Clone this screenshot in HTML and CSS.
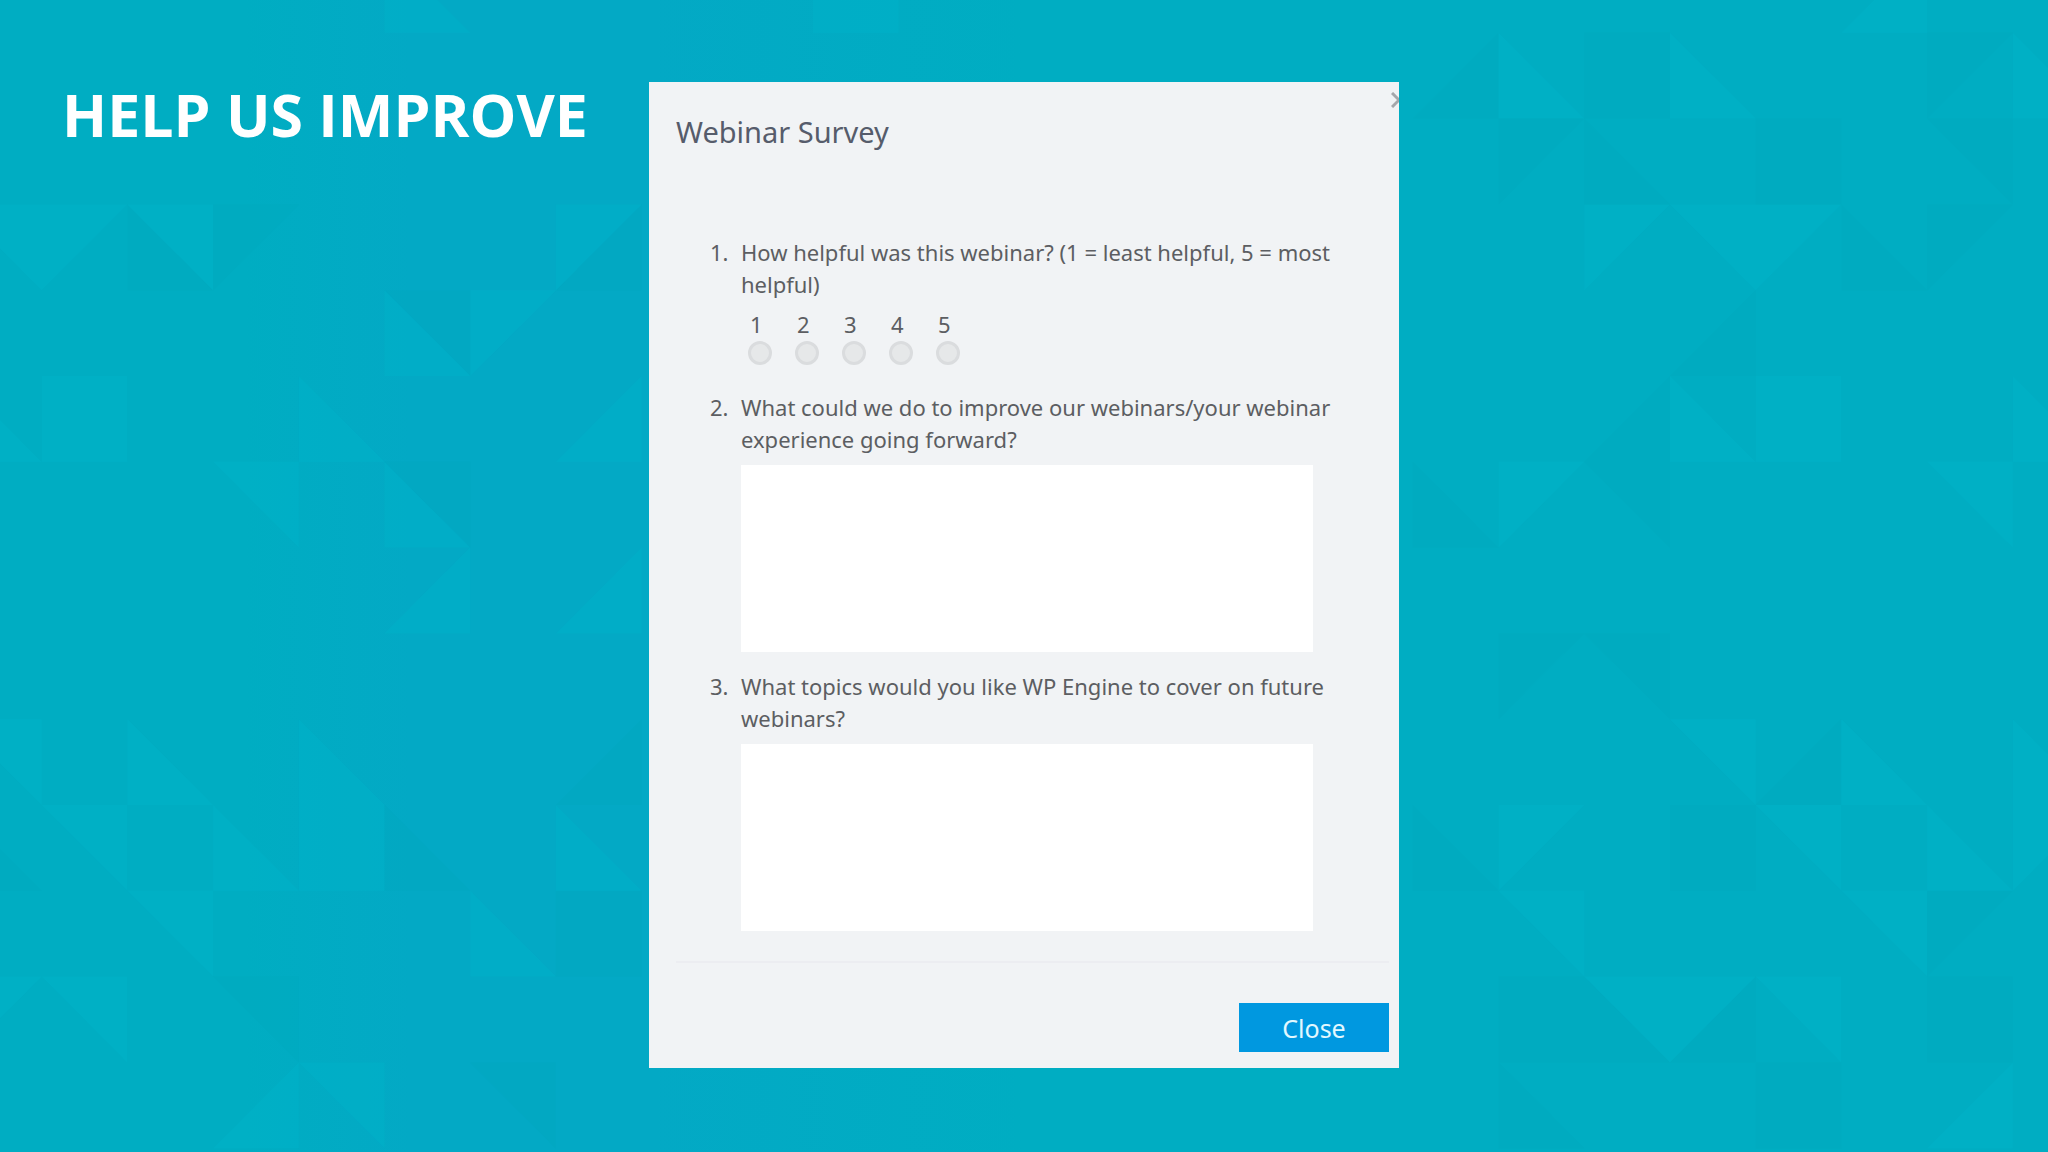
FILE: index.html
```html
<!DOCTYPE html>
<html lang="en">
<head>
    <meta charset="UTF-8">
    <meta name="viewport" content="width=device-width, initial-scale=1.0">
    <title>Webinar Survey</title>
    <link rel="stylesheet" href="styles.css">
</head>
<body>
    <!-- Mosaic backdrop, one unit per tile -->
    <svg class="backdrop" viewBox="0 0 2048 1152" preserveAspectRatio="xMidYMid slice" aria-hidden="true">
        <g transform="translate(-44 -53) scale(85.7 85.8)">
            <path class="tile-dark" d="M2 3v1h1z M3 3h1l-1 1z M8 3v1h-1z M5 4h1v1z M5 6h1v1z M8 9v1h-1z M0 10v1h1z M5 10v1h1z M7 11h1v1h-1z M3 12h1v1z M6 13h1v1z M18 1v1h-1z M19 1h1v1h-1z M23 1h1l-1 1z M18 2h1l-1 1z M19 2v1h1z M21 2h1v1h-1z M23 2h1v1z M22 3v1h1z M23 3h1l-1 1z M21 4v1h-1z M20 5v1h-1z M17 6v1h1z M19 6h1v1z M18 8h1l-1 1z M19 8h1v1z M22 9v1h-1z M17 10v1h1z M20 10h1v1h-1z M23 11h1l-1 1z M18 12h1v1h-1z M19 12v1h1z M21 12v1h-1z M23 12h1v1h-1z M18 13v1h1z M21 13h1v1h-1z"/>
            <path class="tile-light" d="M0 3h2l-1 1z M2 3h1v1z M7 3h1l-1 1z M5 4v1h1z M6 4h1l-1 1z M1 5h1v1h-1z M0 5v1h1z M4 5v1h1z M8 5v1h-1z M3 6h1v1z M5 6v1h1z M6 7v1h-1z M8 7v1h-1z M0 9h1v1z M2 9v1h1z M4 9v1h1z M1 10h1v1z M3 10v1h1z M4 10h1v1h-1z M7 10v1h1z M2 11h1v1z M6 11v1h1z M0 12h1l-1 1z M1 12h1v1z M4 13v1h-1z M4 13h1v1z M5 0v1h1z M10 0h1v1h-1z M23 0v1h-1z M18 1v1h1z M20 1v1h1z M24 1v1h1z M19 3h1l-1 1z M20 3h2l-1 1z M20 5v1h1z M21 5h1v1h-1z M24 5v1h1z M18 6h1l-1 1z M23 6h1v1z M20 9h1v1z M22 9v1h1z M24 9v1h1z M18 10h1l-1 1z M21 10h1v1z M23 10v1h1z M24 10h1l-1 1z M18 11h1v1z M22 11h1v1z M19 12h2l-1 1z M21 12h1v1z M24 13v1h-1z"/>
        </g>
    </svg>

    <main class="slide">
        <h1 class="headline">HELP US IMPROVE</h1>

        <form class="survey">
            <button class="dismiss" type="button" aria-label="Dismiss">
                <svg viewBox="0 0 16 16" width="16" height="16"><path d="M1 1L15 15M15 1L1 15"/></svg>
            </button>
            <h2 class="survey-title">Webinar Survey</h2>

            <ol class="questions">
                <li class="question">
                    <p class="question-text" id="helpful">How helpful was this webinar? (1 = least helpful, 5 = most helpful)</p>
                    <div class="rating" role="radiogroup" aria-labelledby="helpful">
                        <label class="rate">1<input type="radio" name="rating" value="1"></label>
                        <label class="rate">2<input type="radio" name="rating" value="2"></label>
                        <label class="rate">3<input type="radio" name="rating" value="3"></label>
                        <label class="rate">4<input type="radio" name="rating" value="4"></label>
                        <label class="rate">5<input type="radio" name="rating" value="5"></label>
                    </div>
                </li>
                <li class="question">
                    <label class="question-text" for="improve">What could we do to improve our webinars/your webinar experience going forward?</label>
                    <textarea class="answer" id="improve" name="improve"></textarea>
                </li>
                <li class="question">
                    <label class="question-text" for="topics">What topics would you like WP Engine to cover on future webinars?</label>
                    <textarea class="answer" id="topics" name="topics"></textarea>
                </li>
            </ol>

            <div class="survey-footer">
                <button class="close-btn" type="button">Close</button>
            </div>
        </form>
    </main>
</body>
</html>
```
FILE: styles.css
```css
* {
    box-sizing: border-box;
}
body {
    margin: 0;
    min-height: 100vh;
    background: linear-gradient(to right, #00adc2 0%, #00adc2 12%, #03a9c5 20%, #03a9c5 32%, #00adc2 50%);
    font-family: "Noto Sans", "Open Sans", sans-serif;
    color: #5c5e62;
}
.backdrop {
    position: absolute;
    top: 0;
    left: 0;
    width: 100%;
    height: 100%;
}
.tile-dark {
    fill: #00a6bd;
    opacity: 0.25;
}
.tile-light {
    fill: #00b5cb;
    opacity: 0.4;
}
.slide {
    position: relative;
    display: grid;
    grid-template-columns: 1fr minmax(600px, 750px) 1fr;
    align-items: start;
    padding: 82px 0;
}
.headline {
    margin: 0;
    padding-left: 62px;
    font-family: "Open Sans", sans-serif;
    font-size: 59px;
    line-height: 64px;
    font-weight: 700;
    color: white;
    white-space: nowrap;
}
.survey {
    position: relative;
    overflow: hidden;
    padding: 30px 10px 16px 27px;
    background-color: #f1f3f5;
}
.dismiss {
    position: absolute;
    top: 10px;
    right: -8px;
    padding: 0;
    border: none;
    background: none;
    line-height: 0;
    cursor: pointer;
}
.dismiss path {
    stroke: #a5a7ab;
    stroke-width: 3;
    fill: none;
}
.survey-title {
    margin: 0 0 84px;
    font-size: 29px;
    line-height: 40px;
    font-weight: 400;
    color: #565c6b;
}
.questions {
    display: grid;
    gap: 18px;
    margin: 0;
    padding: 0 40px 30px 34px;
    list-style: none;
    counter-reset: question;
}
.question {
    display: grid;
    grid-template-columns: 31px 1fr;
    font-size: 22px;
    line-height: 32px;
    counter-increment: question;
}
.question::before {
    content: counter(question) ".";
}
.question-text {
    margin: 0;
}
.rating {
    grid-column: 2;
    display: flex;
    gap: 23px;
    padding: 10px 0 8px 7px;
}
.rate {
    display: flex;
    flex-direction: column;
    gap: 3px;
    width: 24px;
    padding-left: 2px;
    line-height: 28px;
}
.rate input {
    appearance: none;
    width: 24px;
    height: 24px;
    margin: 0 0 0 -2px;
    border: 3px solid #dadcde;
    border-radius: 50%;
    background-color: #e6e8e9;
}
.rate input:checked {
    background-color: #0098e0;
}
.answer {
    grid-column: 2;
    width: 94%;
    height: 187px;
    margin-top: 10px;
    padding: 8px;
    border: none;
    background-color: white;
    font: inherit;
    color: inherit;
    resize: none;
}
.survey-footer {
    display: flex;
    justify-content: flex-end;
    padding-top: 40px;
    border-top: 2px solid #ecedf1;
}
.close-btn {
    width: 150px;
    height: 49px;
    border: none;
    background-color: #0098e0;
    font-family: inherit;
    font-size: 25px;
    color: #e2f8ff;
    cursor: pointer;
}
```
